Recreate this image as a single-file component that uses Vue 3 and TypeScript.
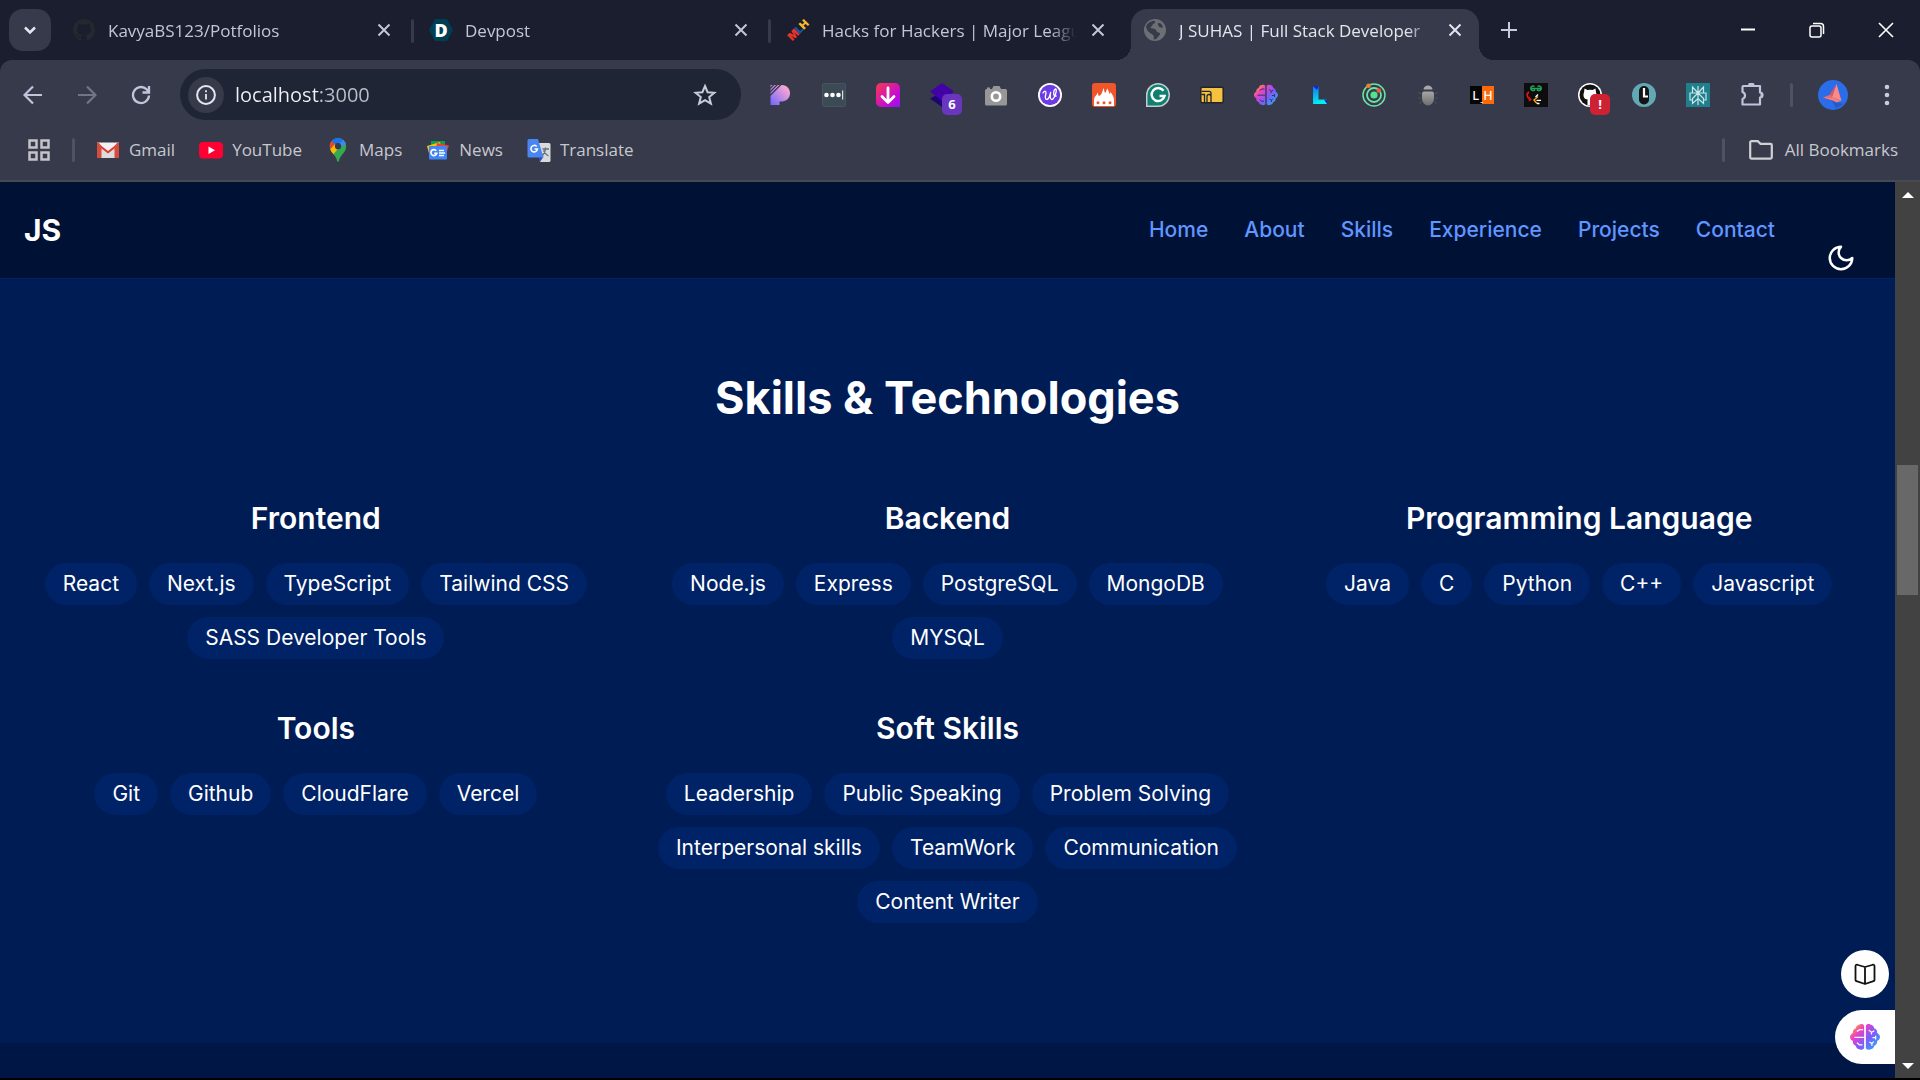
<script setup lang="ts">
import { ref } from 'vue'

interface Tab { title: string; icon: string; active?: boolean }
interface Item { name: string; icon: string; badge?: string; tone?: string }
interface Group { title: string; skills: string[] }

const octocat = 'M12 1C5.900 1 1 5.900 1 12c0 4.900 3.150 9 7.500 10.450.550.100.750-.240.750-.530v-2.050c-3.060.660-3.700-1.300-3.700-1.300-.500-1.270-1.220-1.610-1.220-1.610-1-.680.080-.670.080-.670 1.100.080 1.680 1.140 1.680 1.140.980 1.680 2.570 1.190 3.200.910.100-.710.380-1.190.700-1.470-2.440-.280-5-1.220-5-5.440 0-1.200.430-2.180 1.130-2.950-.110-.280-.490-1.400.110-2.910 0 0 .920-.300 3.020 1.130a10.500 10.500 0 0 1 5.500 0c2.100-1.430 3.020-1.130 3.020-1.130.600 1.510.220 2.630.110 2.910.700.770 1.130 1.750 1.130 2.950 0 4.230-2.570 5.160-5.020 5.430.390.340.750 1.010.750 2.040v3.020c0 .300.200.640.760.530A11 11 0 0 0 12 1z'

const brain = (id: string) => `<defs><linearGradient id="${id}" gradientUnits="userSpaceOnUse" x1="2" y1="2" x2="22" y2="22"><stop offset="0.050" stop-color="#ff9a2e"/><stop offset="0.280" stop-color="#ee3fc8"/><stop offset="0.600" stop-color="#7b5cff"/><stop offset="1" stop-color="#1fb4f5"/></linearGradient></defs>
<g fill="url(#${id})"><path d="M11.300 3v18c-.400 1.200-2.400 1.500-3.800.700-1.300-.100-2.700-1-2.800-2.600C3 18.500 2 17 2.300 15.200 1 14.600 0 13.400 0 12s1-2.600 2.300-3.200C2 7 3 5.500 4.700 5 4.800 3.400 6.200 2.200 7.800 2c1.400-.700 3.100-.200 3.500 1z"/><path d="M12.700 3v18c.400 1.200 2.400 1.500 3.800.700 1.300-.100 2.700-1 2.800-2.600 1.700-.600 2.700-2.100 2.400-3.900C23 14.600 24 13.400 24 12s-1-2.600-2.300-3.200C22 7 21 5.500 19.300 5c-.100-1.600-1.500-2.800-3.100-3-1.400-.700-3.100-.200-3.500 1z"/></g>`
const folds = (c: string) => `<path d="M3.500 12.200h7.500M5.500 7.500 8 6h2.500M5.500 16.500l2 1.700h2.500M15 6.500l2.200 1.700V10m0-1.800L19.500 7M18 12.500h2.500M20.500 11v3M15.500 16l2 1.200 1.500-1.500m-1.500 1.500V19" fill="none" stroke="${c}"/>`

const tabs: Tab[] = [
  { title: 'KavyaBS123/Potfolios', icon: `<path d="${octocat}" fill="#24292e"/>` },
  { title: 'Devpost', icon: '<path d="M6 1h12l6 11-6 11H6L0 12z" fill="#003e54"/><text x="12" y="18.500" text-anchor="middle" font-family="Open Sans, sans-serif" font-weight="800" font-size="18" fill="#fff">D</text>' },
  { title: 'Hacks for Hackers | Major Leagu', icon: '<g transform="rotate(-45 12 12)" font-family="Inter, sans-serif" font-size="11" font-weight="900"><text x="0" y="16" fill="#e73427">M</text><text x="10" y="16" fill="#1d539f">L</text><text x="16" y="16" fill="#f8b92a">H</text></g>' },
  { title: 'J SUHAS | Full Stack Developer', active: true, icon: '<circle cx="12" cy="12" r="11" fill="#6c7074"/><path d="M3 8.500C4 6 7 3 11 2.800c2 .500 1.500 2.200-.500 3-1.500.500-.500 2-2 2.700-1.700.800-.500 2 .500 2 2 0 4 .500 4.500 2.500.300 1.500 1.500 1.500 3 1.700 1 .500.500 2-.500 3-1.500 1.500-2 3.500-4.500 3.800-2-.500.500-3-1.500-4.500-1.500-1.500-4-2.500-6-5z" fill="#373a49"/><path d="M15 5c2-.500 4 1 5 4-1 1-3 1-4-.500-.800-1.200-1.500-2-1-3.500z" fill="#373a49"/>' },
]

const bookmarks: Item[] = [
  { name: 'Gmail', icon: '<path d="M1 4.500h22v15.500H1z" fill="#f2f2f2"/><path d="M5 9l7 6 7-6v11H5z" fill="#dcdcdc"/><path d="M1 4.500 12 13l11-8.500V7l-11 8.500L1 7z" fill="#e0392b"/><path d="M1 4.500h1.500L5.500 8v12H1zM23 4.500h-1.500L18.500 8v12H23z" fill="#d54b3d"/>' },
  { name: 'YouTube', icon: '<rect x="0" y="4" width="24" height="16.500" rx="4" fill="#ff0033"/><path d="M9.500 8.500v7.500l6.500-3.700z" fill="#fff"/>' },
  { name: 'Maps', icon: '<defs><clipPath id="pin"><path d="M12 0c4.700 0 8.200 3.700 8.200 8.300 0 3.500-1.700 5.500-3.700 8-2 2.500-3 4-3.500 6.700-.200.900-1.800.900-2 0-.500-2.700-1.500-4.200-3.500-6.700-2-2.500-3.700-4.500-3.700-8C3.800 3.700 7.300 0 12 0z"/></clipPath></defs><g clip-path="url(#pin)"><path d="M0 0h24v24H0z" fill="#34a853"/><path d="M5 19 17 5 12 2 3 12z" fill="#fbbc04"/><path d="M3 12.500 11 4 4 0 0 10z" fill="#ea4335"/><path d="M5 2.500 11.500 8 19 1 12-1z" fill="#1a73e8"/><path d="M11.500 8 19 0l3 5-6 3z" fill="#4285f4"/></g><circle cx="12" cy="8.200" r="3.100" fill="#373a49"/>' },
  { name: 'News', icon: '<path d="M5 3h14v8H5z" fill="#0c9d58"/><path d="M1 8 14 4l2 9-12 6z" fill="#ffc107"/><path d="M11 5l12 2.500-3.500 10L9 14z" fill="#ea4335"/><rect x="3" y="8" width="18" height="13.500" rx="1" fill="#4285f4"/><path d="M10.300 12.800a3 3 0 1 0 .500 2.500H8.300" fill="none" stroke="#fff" stroke-width="1.600"/><path d="M13 12.500h5M13 15h6M13 17.500h5" stroke="#fff" stroke-width="1.400"/>' },
  { name: 'Translate', icon: '<path d="M11 5h11a1.500 1.500 0 0 1 1.500 1.500v16A1.500 1.500 0 0 1 22 24h-9z" fill="#d9dadc"/><path d="M11.500 18.500h5L13 24z" fill="#2a48c4"/><path d="M2 1h9l5.500 18.500H2A1.500 1.500 0 0 1 .500 18V2.500A1.500 1.500 0 0 1 2 1z" fill="#4a86f0"/><path d="M9.700 8.500a3.300 3.300 0 1 0 .800 2.500H7.500" fill="none" stroke="#fff" stroke-width="1.500"/><path d="M15.500 11h6.500M18.500 9.500V11c-.300 3-1.500 5-3 6.500M16.500 12.500c1 2.500 3 4.500 5 5.500" fill="none" stroke="#607179" stroke-width="1.300"/>' },
]

const extensions: Item[] = [
  { name: 'Pixel', icon: '<defs><linearGradient id="pg" x1="1" y1="0" x2="0" y2="1"><stop offset="0.200" stop-color="#f3a2d4"/><stop offset="1" stop-color="#6f66ff"/></linearGradient></defs><path d="M2.500 2H14c5 0 8 3.700 8 8.300 0 5-4 8.200-8 8.200h-2.500V22h-9z" fill="url(#pg)"/><path d="M2 12.500 13 1.500M2 9l7.500-7.500M2 5.500l4-4" stroke="#373a4b" stroke-width="1.300"/>' },
  { name: 'Passwords', icon: '<rect x=".500" y=".500" width="23" height="23" rx="1" fill="#3c4a55" stroke="#45555c"/><circle cx="4.500" cy="12" r="2.300" fill="#fff"/><circle cx="10.500" cy="12" r="2.300" fill="#fff"/><circle cx="16.500" cy="12" r="2.300" fill="#fff"/><path d="M20.700 7.500v9" stroke="#fff" stroke-width="1"/>' },
  { name: 'Downloader', icon: '<defs><linearGradient id="dg" x1="0" y1="0" x2="1" y2="1"><stop offset="0" stop-color="#f9394d"/><stop offset=".700" stop-color="#c30ad8"/><stop offset="1" stop-color="#8d16f0"/></linearGradient></defs><path d="M5 0h14a5 5 0 0 1 5 5v19H5a5 5 0 0 1-5-5V5a5 5 0 0 1 5-5z" fill="url(#dg)"/><path d="M12 5v14M6 13.500l6 6 6-6" fill="none" stroke="#fff" stroke-width="2.800" stroke-linecap="round" stroke-linejoin="round"/>' },
  { name: 'Layers', badge: '6', tone: 'violet', icon: '<path d="M0 15.500l12-6 12 6L12 24z" fill="#1e0472"/><path d="M0 8.500 12 0l12 8.500L12 18z" fill="#4302a8"/>' },
  { name: 'Screen capture', icon: '<path d="M3 6V4.500h3V6h2l1.500-3h6L17 6h4.500A1.500 1.500 0 0 1 23 7.500V21a1.500 1.500 0 0 1-1.500 1.500h-19A1.500 1.500 0 0 1 1 21V7.500A1.500 1.500 0 0 1 2.500 6z" fill="#979797"/><circle cx="12" cy="13.500" r="4.200" fill="#979797" stroke="#fff" stroke-width="2.600"/>' },
  { name: 'Wordtune', icon: '<circle cx="12" cy="12" r="12" fill="#fff"/><circle cx="12" cy="12" r="10.200" fill="#6b3be4"/><path d="M5 10c1.500-2.500 3-2.500 3 0-1 4-1 6.500.700 6.500 2 0 3.500-5 4-7.500-.700 4-.700 7.500 1 7.500 2.500 0 6-10 4-10.500-2-.200-3.500 8 .500 7" fill="none" stroke="#fff" stroke-width="1.300" stroke-linecap="round"/>' },
  { name: 'Streaks', icon: '<rect width="24" height="24" rx="3" fill="#f1552a"/><path d="M2 23V17C2 13 5 13 5.500 9.500c1 1.500.500 3 1.500 3.500 2.500-1 3-3 4.500-8 1 2 .500 3.500 1.500 5 1.500-1 1.500-3 2-4.500 2 2 2 5 3 5.500.500-1 .300-1.500.500-2C20.500 12 22 14 22 17v6z" fill="#fff"/><g fill="#f1552a"><circle cx="6" cy="19.700" r="1.500"/><circle cx="12" cy="19.700" r="1.500"/><circle cx="18" cy="19.700" r="1.500"/></g>' },
  { name: 'Grammar', icon: '<path d="M12 0a12 12 0 1 1 0 24H0V12A12 12 0 0 1 12 0z" fill="#c5cdd0"/><path d="M12 1.500a10.500 10.500 0 1 1 0 21H1.500V12A10.500 10.500 0 0 1 12 1.500z" fill="#0e7f70"/><path d="M17.500 7.800A6.500 6.500 0 1 0 18.500 13H13.500" fill="none" stroke="#fff" stroke-width="2.500"/>' },
  { name: 'Folders', icon: '<rect x=".800" y="4.300" width="22.400" height="15.500" rx="1.500" fill="#f4c23e" stroke="#23242c" stroke-width="1.500"/><path d="M1.500 8.300h7.500a2 2 0 0 1 2 2v9.500M7 19.500v-6a2 2 0 0 1 4 0M1.500 11.500H4.500v8" fill="none" stroke="#23242c" stroke-width="1.300"/>' },
  { name: 'Brain', icon: brain('bx') + folds('#373a49') },
  { name: 'Letters', icon: '<defs><linearGradient id="lg" x1="0" y1="0" x2=".300" y2="1"><stop offset="0" stop-color="#1470f5"/><stop offset="1" stop-color="#00f0ee"/></linearGradient></defs><path d="M5 3h5.500v13.500H19V21H5z" fill="url(#lg)"/><path d="M5 3h5.500L9 7zM16 16.500h3V21z" fill="#1226c9"/>' },
  { name: 'Orbit', icon: '<g fill="none" stroke="#6de3a2"><circle cx="12" cy="12" r="11" stroke-width="1.500"/><circle cx="12" cy="12" r="7" stroke-width="1.800"/></g><circle cx="12" cy="12" r="3.600" fill="#4fe38b"/><circle cx="6.500" cy="2.700" r="2.300" fill="#f07c2e"/><circle cx="16.800" cy="7.500" r="2.300" fill="#f15b3a"/>' },
  { name: 'Bug', icon: '<defs><linearGradient id="bg" x1="0" y1="0" x2="0" y2="1"><stop offset="0" stop-color="#a6a6a6"/><stop offset="1" stop-color="#6d6d6d"/></linearGradient></defs><path d="M7.500 6.500a4.500 4 0 0 1 9 0z" fill="#a9a9a9"/><path d="M6 10.500Q6 8.500 8 8.500h8q2 0 2 2V15c0 4.500-3 7.500-6 7.500S6 19.500 6 15z" fill="url(#bg)"/><path d="M5 11 2.500 9M5 15H2M5.500 18.500 3.500 21M19 11l2.500-2M19 15h3M18.500 18.500l2 2.500" stroke="#4c4f5b" stroke-width="1.200"/>' },
  { name: 'LeetHub', icon: '<rect y="3" width="12" height="18" fill="#050505"/><rect x="12" y="3" width="12" height="18" fill="#fb6a0a"/><g font-family="Inter, sans-serif" font-size="12" font-weight="500" fill="#fff"><text x="2.500" y="16.500">L</text><text x="13.500" y="16.500">H</text></g><path d="M10.500 19.500h3" stroke="#ccc"/>' },
  { name: 'Converter', icon: '<rect width="24" height="24" fill="#0d0d0d"/><path d="M12 5.500H6.500M17.500 5.500H12M10.500 3.500a2.300 2.300 0 1 0 .500 3M13.500 3.500a2.300 2.300 0 1 1-.500 3" fill="none" stroke="#24a25c" stroke-width="1.500"/><path d="M5 9c-3 2-2 6 1 7" fill="none" stroke="#e01414" stroke-width="1.800"/><path d="M4.500 18.500 8 17l-3-3.500z" fill="#e01414"/><path d="M14 13.500 10 17l3 3.500" fill="none" stroke="#f2a01e" stroke-width="1.500"/><path d="M14 11.500l-2.500 2.500M12.500 17.300h4.500M13 20.500h2.500" stroke="#fff" stroke-width="1.300"/>' },
  { name: 'Repository helper', badge: '!', tone: 'red', icon: `<circle cx="12" cy="12" r="12" fill="#fff"/><circle cx="12" cy="12" r="10.500" fill="#111"/><path d="M6.500 5.500 9.500 7a9 9 0 0 1 5 0l3-1.500.500 4c1 2 .500 5.500-1.500 6.500-2 1-7 1-9 0S5 11.500 6 9.500zM9.500 16h5v6h-5z" fill="#fff"/>` },
  { name: 'Clock', icon: '<circle cx="12" cy="12" r="12" fill="#62a9b6"/><rect x="7" y="3" width="10" height="18.500" rx="5" fill="#141414"/><path d="M12 5v8.500h4" fill="none" stroke="#fff" stroke-width="2.200"/>' },
  { name: 'Search helper', icon: '<rect width="24" height="24" fill="#1f7f8c"/><path d="M12 3v19M12 10 6.500 4v6M12 10l5.500-6v6M6.500 10H4v7h2.500M17.500 10H20v7h-2.500M4.500 10h15M12 10l-5.500 5.500v5L12 15.500l5.500 5v-5L12 10" fill="none" stroke="#c8e8ea" stroke-width="1.200"/>' },
  { name: 'Extensions', icon: '<path d="M3.500 3H20v6.500a2.500 2.500 0 0 1 0 5V21.500H2.500V16a3.700 3.700 0 0 0 0-7V4q0-1 1-1z" fill="none" stroke="#bfc3dc" stroke-width="2.200" stroke-linejoin="round"/><path d="M8 2.500a3.300 3 0 0 1 6.600 0zM20.500 9.300a3 3 0 0 1 0 5.600z" fill="#bfc3dc"/>' },
]

const links = ['Home', 'About', 'Skills', 'Experience', 'Projects', 'Contact']

const groups: Group[] = [
  { title: 'Frontend', skills: ['React', 'Next.js', 'TypeScript', 'Tailwind CSS', 'SASS Developer Tools'] },
  { title: 'Backend', skills: ['Node.js', 'Express', 'PostgreSQL', 'MongoDB', 'MYSQL'] },
  { title: 'Programming Language', skills: ['Java', 'C', 'Python', 'C++', 'Javascript'] },
  { title: 'Tools', skills: ['Git', 'Github', 'CloudFlare', 'Vercel'] },
  { title: 'Soft Skills', skills: ['Leadership', 'Public Speaking', 'Problem Solving', 'Interpersonal skills', 'TeamWork', 'Communication', 'Content Writer'] },
]

const address = ref('localhost:3000')
const brainMark = brain('bf') + folds('#fff')
</script>

<template>
  <div class="window">
    <header class="chrome">
      <div class="tabstrip">
        <button class="tab-search" aria-label="Search tabs">
          <svg width="18" height="18" viewBox="0 0 18 18"><path d="M4 6.500l5 5 5-5" fill="none" stroke="#e4e6f0" stroke-width="2.500" /></svg>
        </button>
        <div class="tabs">
          <div v-for="tab in tabs" :key="tab.title" class="tab" :class="{ active: tab.active }">
            <svg class="favicon" viewBox="0 0 24 24" v-html="tab.icon"></svg>
            <span class="tab-title">{{ tab.title }}</span>
            <button class="tab-close" :aria-label="`Close ${tab.title}`">
              <svg width="14" height="14" viewBox="0 0 14 14"><path d="M1.500 1.500l11 11m0-11l-11 11" stroke="currentColor" stroke-width="2" /></svg>
            </button>
          </div>
        </div>
        <button class="new-tab" aria-label="New tab">
          <svg width="16" height="16" viewBox="0 0 16 16"><path d="M8 0v16M0 8h16" stroke="#c8cbe0" stroke-width="2" /></svg>
        </button>
        <div class="window-controls">
          <button aria-label="Minimize"><svg width="16" height="16" viewBox="0 0 16 16"><path d="M1 7.500h14" stroke="#fff" stroke-width="2" /></svg></button>
          <button aria-label="Restore"><svg width="16" height="16" viewBox="0 0 16 16" fill="none" stroke="#fff" stroke-width="1.500"><rect x="1" y="4" width="11" height="11" rx="2" /><path d="M4 1.500h7.500a3 3 0 0 1 3 3V12" /></svg></button>
          <button aria-label="Close window"><svg width="16" height="16" viewBox="0 0 16 16"><path d="M1 1l14 14M15 1L1 15" stroke="#fff" stroke-width="1.600" /></svg></button>
        </div>
      </div>

      <div class="panel">
        <div class="toolbar">
          <button class="nav-button" aria-label="Back">
            <svg width="20" height="20" viewBox="0 0 20 20" fill="none" stroke="#c1c5dc" stroke-width="2.200"><path d="M19 10H2M10 1.500L1.500 10l8.500 8.500" /></svg>
          </button>
          <button class="nav-button" aria-label="Forward">
            <svg width="20" height="20" viewBox="0 0 20 20" fill="none" stroke="#727585" stroke-width="2.200"><path d="M1 10h17M10 1.500l8.500 8.500-8.500 8.500" /></svg>
          </button>
          <button class="nav-button" aria-label="Reload">
            <svg width="20" height="20" viewBox="0 0 20 20" fill="none" stroke="#c1c5dc" stroke-width="2.300"><path d="M18 10.500A8 8 0 1 1 15.500 4.200L18 7M18 1v6.500h-6.500" /></svg>
          </button>
          <div class="omnibox">
            <button class="site-info" aria-label="Site information">
              <svg width="20" height="20" viewBox="0 0 20 20"><circle cx="10" cy="10" r="8.900" fill="none" stroke="#e4e6ee" stroke-width="2" /><path d="M10 9v5.500M10 5.200v2" stroke="#e4e6ee" stroke-width="1.800" /></svg>
            </button>
            <input v-model="address" class="address" type="text" aria-label="Address" spellcheck="false" />
            <button class="star" aria-label="Bookmark this page">
              <svg width="24" height="24" viewBox="0 0 24 24"><path d="M12 3l2.600 6.200 6.800.500-5.200 4.400 1.700 6.600-5.900-3.600-5.900 3.600 1.700-6.600L2.600 9.700l6.800-.500z" fill="none" stroke="#c9ccd8" stroke-width="2" /></svg>
            </button>
          </div>
          <div class="extensions">
            <button v-for="item in extensions" :key="item.name" class="extension" :aria-label="item.name">
              <svg width="24" height="24" viewBox="0 0 24 24" v-html="item.icon"></svg>
              <span v-if="item.badge" class="badge" :class="item.tone">{{ item.badge }}</span>
            </button>
          </div>
          <span class="divider"></span>
          <button class="avatar" aria-label="Profile">
            <svg width="30" height="30" viewBox="0 0 30 30"><circle cx="15" cy="15" r="15" fill="#2b6de9" /><path d="M14 21 26 24 18 28z" fill="#174aa8" opacity=".5" /><path d="M5 17.500 14 14l3.500 6.500-3-.500z" fill="#e8696f" /><path d="M18.500 4 23.500 21 14 17z" fill="#ff8a84" /><path d="M18.500 4 14 17l-2-3z" fill="#d9595f" /><path d="M5 17.500l11 .500 7 3-4.500 1.500-3.500-2z" fill="#f77f7b" /></svg>
          </button>
          <button class="menu" aria-label="Menu">
            <svg width="6" height="22" viewBox="0 0 6 22" fill="#c8cbe0"><circle cx="3" cy="3" r="2.300" /><circle cx="3" cy="11" r="2.300" /><circle cx="3" cy="19" r="2.300" /></svg>
          </button>
        </div>

        <nav class="bookmarks" aria-label="Bookmarks">
          <button class="apps" aria-label="Apps">
            <svg width="22" height="22" viewBox="0 0 22 22" fill="none" stroke="#c4c4c8" stroke-width="2.500"><path d="M1.500 1.500h7v7h-7zM13.500 1.500h7v7h-7zM1.500 13.500h7v7h-7zM13.500 13.500h7v7h-7z" /></svg>
          </button>
          <span class="divider"></span>
          <div class="bookmark-list">
            <a v-for="item in bookmarks" :key="item.name" href="#" class="bookmark">
              <svg width="24" height="24" viewBox="0 0 24 24" v-html="item.icon"></svg>
              <span>{{ item.name }}</span>
            </a>
          </div>
          <span class="divider"></span>
          <button class="bookmark all">
            <svg width="24" height="24" viewBox="0 0 24 24"><path d="M1.200 4.500a1.300 1.300 0 0 1 1.300-1.300h6.300l2.700 2.600h10a1.300 1.300 0 0 1 1.300 1.300v12.200a1.300 1.300 0 0 1-1.300 1.300h-19a1.300 1.300 0 0 1-1.300-1.300z" fill="none" stroke="#cfd0d6" stroke-width="2.200" /></svg>
            <span>All Bookmarks</span>
          </button>
        </nav>
      </div>
    </header>

    <div class="viewport">
      <div class="page">
        <header class="site-header">
          <a href="#" class="brand">JS</a>
          <nav class="site-nav">
            <a v-for="link in links" :key="link" href="#">{{ link }}</a>
          </nav>
          <button class="theme" aria-label="Toggle theme">
            <svg width="30" height="30" viewBox="0 0 24 24" fill="none" stroke="#fff" stroke-width="2" stroke-linecap="round" stroke-linejoin="round"><path d="M12 3a6 6 0 0 0 9 9 9 9 0 1 1-9-9Z" /></svg>
          </button>
        </header>

        <main class="skills">
          <h2>Skills &amp; Technologies</h2>
          <div class="groups">
            <section v-for="group in groups" :key="group.title" class="group">
              <h3>{{ group.title }}</h3>
              <ul>
                <li v-for="skill in group.skills" :key="skill">{{ skill }}</li>
              </ul>
            </section>
          </div>
        </main>
        <div class="next-section"></div>

        <div class="floating">
          <button class="reader" aria-label="Reader">
            <svg width="24" height="24" viewBox="0 0 24 24" fill="none" stroke="#111" stroke-width="1.800" stroke-linejoin="round"><path d="M12 5 5 3a1.500 1.500 0 0 0-2.500 1.300V18a1.500 1.500 0 0 0 1 1.200L12 22l8.500-2.800a1.500 1.500 0 0 0 1-1.200V4.300A1.500 1.500 0 0 0 19 3zM12 5v17" /></svg>
          </button>
          <button class="assistant" aria-label="Assistant">
            <svg width="30" height="30" viewBox="0 0 24 24" v-html="brainMark"></svg>
          </button>
        </div>
      </div>

      <div class="scrollbar" aria-hidden="true">
        <svg width="12" height="6" viewBox="0 0 12 6"><path d="M0 6l6-6 6 6z" fill="#fff" /></svg>
        <div class="track">
          <div class="before"></div>
          <div class="thumb"></div>
          <div class="after"></div>
        </div>
        <svg width="12" height="6" viewBox="0 0 12 6"><path d="M0 0l6 6 6-6z" fill="#fff" /></svg>
      </div>
    </div>
  </div>
</template>

<style>
body {
  margin: 0;
  background: #000;
}
</style>

<style scoped>
* {
  box-sizing: border-box;
}

button {
  display: flex;
  align-items: center;
  justify-content: center;
  flex: none;
  padding: 0;
  border: 0;
  background: none;
  color: inherit;
  font: inherit;
}

a {
  color: inherit;
  text-decoration: none;
}

svg {
  display: block;
  flex: none;
}

.window {
  display: flex;
  flex-direction: column;
  min-height: 100vh;
  border-bottom: 2px solid #000;
  background: #1a1e2f;
}

/* Browser frame */
.chrome {
  color: #c3c6da;
  font: 17px/24px "Open Sans", "Noto Sans", sans-serif;
}

.tabstrip {
  display: flex;
  height: 60px;
  padding-left: 9px;
}

.tab-search {
  width: 42px;
  height: 42px;
  margin-top: 9px;
  border-radius: 14px;
  background: #363a4b;
}

.tabs {
  display: flex;
  gap: 9px;
  padding: 9px 0 0 9px;
}

.tab {
  position: relative;
  display: flex;
  align-items: center;
  width: 348px;
  height: 51px;
  padding: 0 12px 9px;
}

.tab::after {
  content: "";
  position: absolute;
  top: 10px;
  right: -6px;
  width: 3px;
  height: 24px;
  border-radius: 2px;
  background: #363a4b;
}

.tab.active {
  border-radius: 16px 16px 0 0;
  background: #363a4b;
  color: #e3e5ee;
}

.tab:nth-child(3)::after {
  display: none;
}

.tab.active::before,
.tab.active::after {
  content: "";
  position: absolute;
  top: auto;
  bottom: 0;
  width: 15px;
  height: 15px;
  border-radius: 0;
}

.tab.active::before {
  left: -15px;
  background: radial-gradient(circle at 0 0, transparent 15px, #363a4b 15px);
}

.tab.active::after {
  right: -15px;
  background: radial-gradient(circle at 100% 0, transparent 15px, #363a4b 15px);
}

.favicon {
  width: 24px;
  height: 24px;
  overflow: visible;
}

.tab-title {
  flex: 1;
  min-width: 0;
  margin: 2px 0 0 12px;
  overflow: hidden;
  white-space: nowrap;
  mask-image: linear-gradient(90deg, #000 calc(100% - 36px), transparent calc(100% - 10px));
}

.tab-close {
  width: 24px;
  height: 24px;
}

.new-tab {
  width: 42px;
  height: 60px;
  margin-left: 9px;
}

.window-controls {
  display: flex;
  margin-left: auto;
}

.window-controls button {
  width: 69px;
  height: 60px;
}

.panel {
  border-bottom: 2px solid #484a52;
  border-radius: 12px 12px 0 0;
  background: #363a4b;
}

.toolbar {
  display: flex;
  align-items: center;
  height: 69px;
  padding-left: 6px;
}

.nav-button {
  width: 54px;
  height: 48px;
}

.omnibox {
  display: flex;
  flex: 1;
  align-items: center;
  height: 51px;
  margin-left: 12px;
  padding: 0 24px 0 8px;
  border-radius: 26px;
  background: #1f2534;
}

.site-info {
  width: 36px;
  height: 36px;
  border-radius: 50%;
  background: #363a4b;
}

.address {
  flex: 1;
  min-width: 0;
  height: 36px;
  margin-left: 11px;
  padding: 0;
  border: 0;
  outline: 0;
  background: linear-gradient(90deg, #f0f2f8 85px, #bcc0cc 85px) text;
  color: transparent;
  font: 20px/36px "Open Sans", "Noto Sans", sans-serif;
}

.extensions {
  display: flex;
  margin-left: 12px;
}

.extension {
  position: relative;
  width: 54px;
  height: 48px;
}

.badge {
  position: absolute;
  top: 23px;
  left: 27px;
  width: 20px;
  height: 21px;
  border-radius: 5px;
  color: #fff;
  font-size: 13px;
  font-weight: 700;
  line-height: 21px;
}

.badge.violet {
  background: #6a35bf;
}

.badge.red {
  background: #ce2233;
}

.divider {
  flex: none;
  width: 3px;
  height: 24px;
  border-radius: 2px;
  background: #4e5264;
}

.toolbar .divider {
  margin: 0 25px 0 11px;
}

.avatar {
  width: 30px;
  height: 30px;
}

.menu {
  width: 48px;
  height: 48px;
  margin: 0 9px 0 15px;
}

.bookmarks {
  display: flex;
  align-items: center;
  height: 51px;
  padding: 0 22px 9px 28px;
  color: #c7c8ce;
}

.apps {
  margin-right: 22px;
}

.bookmark-list {
  display: flex;
  flex: 1;
  gap: 24px;
  margin-left: 21px;
}

.bookmark {
  display: flex;
  align-items: center;
  gap: 9px;
}

.bookmark.all {
  gap: 12px;
  margin-left: 24px;
}

/* Portfolio page */
.viewport {
  display: flex;
  flex: 1;
}

.page {
  position: relative;
  display: flex;
  flex: 1;
  flex-direction: column;
  min-width: 0;
  background: #001c54;
  color: #fff;
  font-family: Inter, "Liberation Sans", sans-serif;
}

.site-header {
  position: relative;
  display: flex;
  align-items: center;
  justify-content: space-between;
  height: 97px;
  padding: 0 120px 0 24px;
  border-bottom: 1px solid #002266;
  background: #001136;
}

.brand {
  font-size: 30px;
  font-weight: 700;
  line-height: 42px;
}

.site-nav {
  display: flex;
  gap: 36px;
  color: #6096ff;
  font-size: 21px;
  font-weight: 500;
  line-height: 30px;
}

.theme {
  position: absolute;
  top: 52px;
  right: 30px;
  width: 48px;
  height: 48px;
}

.skills {
  padding: 92px 24px 120px;
  text-align: center;
}

h2 {
  margin: 0 0 72px;
  font-size: 45px;
  font-weight: 700;
  line-height: 54px;
}

.groups {
  display: grid;
  grid-template-columns: repeat(3, 1fr);
  gap: 48px;
}

h3 {
  margin: 0 0 24px;
  font-size: 30px;
  font-weight: 600;
  line-height: 42px;
}

ul {
  display: flex;
  flex-wrap: wrap;
  justify-content: center;
  gap: 12px;
  margin: 0;
  padding: 0;
  list-style: none;
}

li {
  padding: 6px 18px;
  border-radius: 21px;
  background: #002266;
  font-size: 21px;
  font-weight: 400;
  line-height: 30px;
}

.next-section {
  flex: 1;
  min-height: 35px;
  background: #001745;
}

.floating {
  position: absolute;
  right: 0;
  bottom: 14px;
  display: flex;
  flex-direction: column;
  align-items: flex-end;
  gap: 12px;
}

.reader {
  width: 48px;
  height: 48px;
  margin-right: 6px;
  border-radius: 50%;
  background: #fff;
}

.assistant {
  width: 60px;
  height: 54px;
  border-radius: 27px 0 0 27px;
  background: #fff;
}

.scrollbar {
  display: flex;
  flex-direction: column;
  align-items: center;
  width: 25px;
  padding: 10px 0 9px;
  background: #424242;
}

.track {
  display: flex;
  flex: 1;
  flex-direction: column;
  width: 21px;
  margin: 8px 0;
}

.before {
  flex: 259;
}

.thumb {
  flex: 130;
  background: #686868;
}

.after {
  flex: 460;
}
</style>
